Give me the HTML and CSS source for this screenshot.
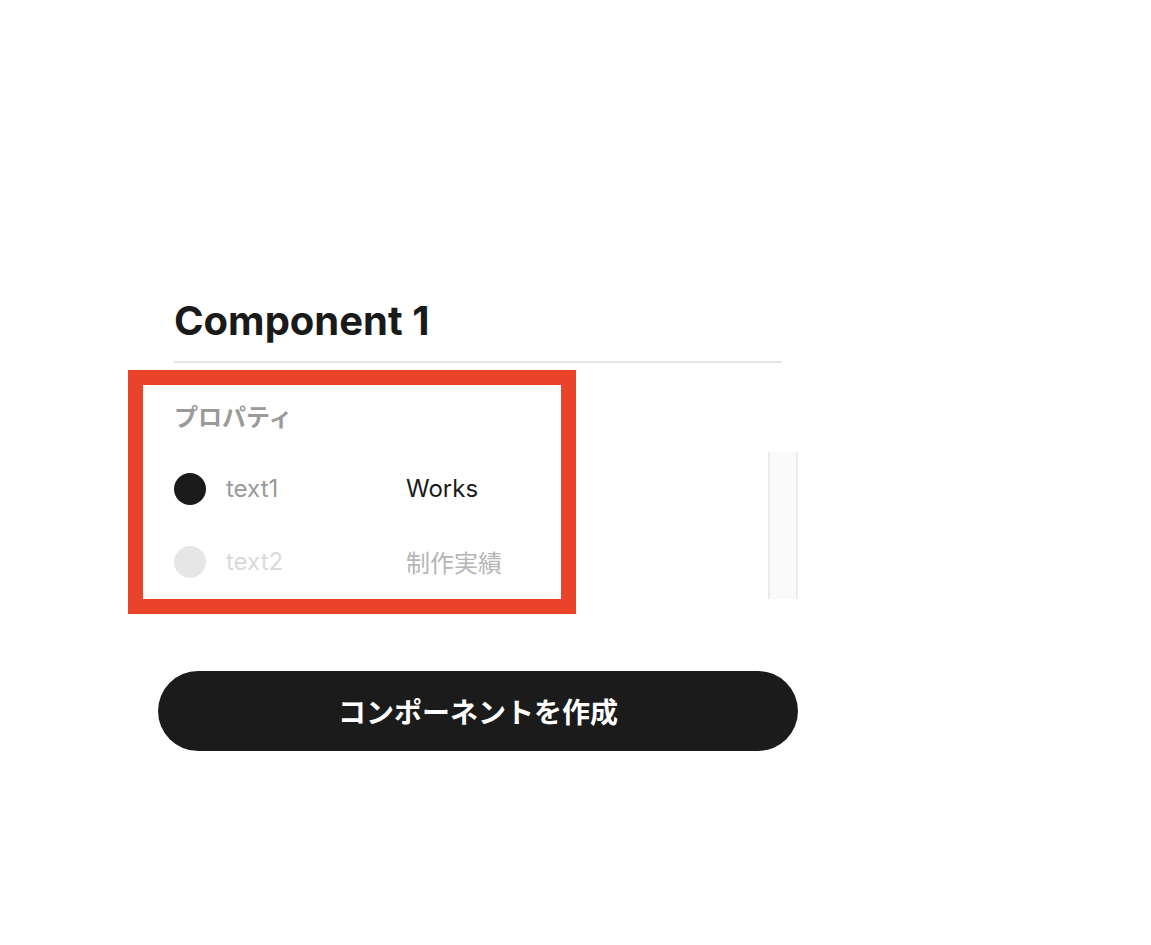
FILE: index.html
```html
<!DOCTYPE html>
<html lang="ja">
<head>
<meta charset="utf-8">
<title>Component 1</title>
<link rel="stylesheet" href="styles.css">
</head>
<body>
<main class="panel">
  <header class="head">
    <h1 class="title">Component 1</h1>
  </header>
  <section class="props">
    <h2 class="props-label">プロパティ</h2>
    <div class="list-wrap">
      <ul class="list">
        <li class="row is-active">
          <span class="dot"></span>
          <span class="key">text1</span>
          <span class="value">Works</span>
        </li>
        <li class="row is-inactive">
          <span class="dot"></span>
          <span class="key">text2</span>
          <span class="value">制作実績</span>
        </li>
      </ul>
      <div class="scrollbar"></div>
    </div>
  </section>
  <button class="create-btn" type="button">コンポーネントを作成</button>
</main>
<div class="highlight"></div>
</body>
</html>
```

FILE: styles.css
```css
* { box-sizing: border-box; }

html, body {
  margin: 0;
  padding: 0;
  background: #ffffff;
}

body {
  font-family: "Inter", "Noto Sans CJK JP", sans-serif;
  color: #1a1a1a;
  position: relative;
  min-height: 945px;
}

.panel {
  width: 640px;
  margin-left: 158px;
  padding-top: 297px;
  display: flex;
  flex-direction: column;
}

.head {
  border-bottom: 2px solid #e5e5e5;
  margin: 0 16px;
  padding: 0 0 16px 0;
}

.title {
  margin: 0;
  font-size: 40px;
  line-height: 48px;
  font-weight: 700;
  letter-spacing: 0;
  color: #1a1a1a;
}

.props {
  display: flex;
  flex-direction: column;
}

.props-label {
  margin: 41px 0 0 16px;
  font-family: "Noto Sans CJK JP", sans-serif;
  font-size: 24px;
  line-height: 24px;
  font-weight: 700;
  color: #9a9a9a;
}

.list-wrap {
  margin-top: 24px;
  height: 147px;
  display: flex;
  overflow: hidden;
}

.list {
  flex: 1;
  list-style: none;
  margin: 0;
  padding: 0 0 0 16px;
}

.row {
  height: 73px;
  display: flex;
  align-items: center;
  font-size: 24px;
}

.dot {
  width: 32px;
  height: 32px;
  border-radius: 50%;
  flex: none;
  margin-right: 20px;
}

.key {
  width: 180px;
  flex: none;
}

.is-active .dot { background: #1b1b1b; }
.is-active .key { color: #9a9a9a; }
.is-active .value { color: #1a1a1a; }

.is-inactive .dot { background: #e6e6e6; }
.is-inactive .key { color: #dadada; }
.is-inactive .value { color: #b5b5b5; }

.scrollbar {
  width: 30px;
  flex: none;
  background: #fafafa;
  border-left: 2px solid #ebebeb;
  border-right: 2px solid #ebebeb;
}

.create-btn {
  margin-top: 72px;
  width: 640px;
  height: 80px;
  border: 0;
  border-radius: 40px;
  background: #1b1b1b;
  color: #ffffff;
  font-family: "Noto Sans CJK JP", sans-serif;
  font-size: 28px;
  font-weight: 700;
  cursor: pointer;
}

.highlight {
  position: absolute;
  left: 128px;
  top: 370px;
  width: 448px;
  height: 244px;
  border: 15px solid #e9432a;
  pointer-events: none;
}
```
